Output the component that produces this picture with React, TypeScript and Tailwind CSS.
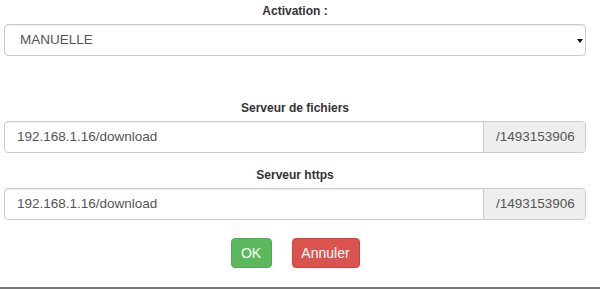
export default function App() {
  const font = { fontFamily: '"Liberation Sans", Arial, sans-serif' };
  return (
    <div style={font} className="w-[600px] h-[289px] bg-white flex flex-col text-[#333]">
      <div className="px-[4px] w-[590px] flex flex-col">
        <label className="mt-[3px] h-[17px] leading-[17px] text-[12px] font-bold text-center">
          Activation :
        </label>
        <div className="mt-[4px] h-[32px] flex items-center justify-between rounded-[4px] border border-[#ccc] shadow-[inset_0_1px_1px_rgba(0,0,0,0.075)] pl-[15px] pr-[2px]">
          <span className="text-[13.5px] text-[#555]">MANUELLE</span>
          <svg width="6" height="4" viewBox="0 0 6 4" className="mt-[1px]">
            <path d="M0 0 L6 0 L3 4 Z" fill="#111" />
          </svg>
        </div>

        <label className="mt-[44px] h-[17px] leading-[17px] text-[12px] font-bold text-center">
          Serveur de fichiers
        </label>
        <div className="mt-[4px] h-[32px] flex rounded-[4px] border border-[#ccc] overflow-hidden">
          <div className="flex-1 flex items-center px-[12px] text-[13.5px] text-[#555] shadow-[inset_0_1px_1px_rgba(0,0,0,0.075)]">
            192.168.1.16/download
          </div>
          <div className="w-[102px] flex items-center px-[12px] bg-[#eee] border-l border-[#ccc] text-[13.5px] text-[#555]">
            /1493153906
          </div>
        </div>

        <label className="mt-[14px] h-[17px] leading-[17px] text-[12px] font-bold text-center">
          Serveur https
        </label>
        <div className="mt-[4px] h-[32px] flex rounded-[4px] border border-[#ccc] overflow-hidden">
          <div className="flex-1 flex items-center px-[12px] text-[13.5px] text-[#555] shadow-[inset_0_1px_1px_rgba(0,0,0,0.075)]">
            192.168.1.16/download
          </div>
          <div className="w-[102px] flex items-center px-[12px] bg-[#eee] border-l border-[#ccc] text-[13.5px] text-[#555]">
            /1493153906
          </div>
        </div>

        <div className="mt-[18px] flex justify-center gap-[20px]">
          <button className="h-[30px] w-[41px] rounded-[4px] bg-[#5cb85c] border border-[#4cae4c] text-white text-[14px]">
            OK
          </button>
          <button className="h-[30px] w-[68px] rounded-[4px] bg-[#d9534f] border border-[#d43f3a] text-white text-[14px]">
            Annuler
          </button>
        </div>
      </div>
      <div className="mt-auto h-[2px] bg-[#777]" />
    </div>
  );
}
